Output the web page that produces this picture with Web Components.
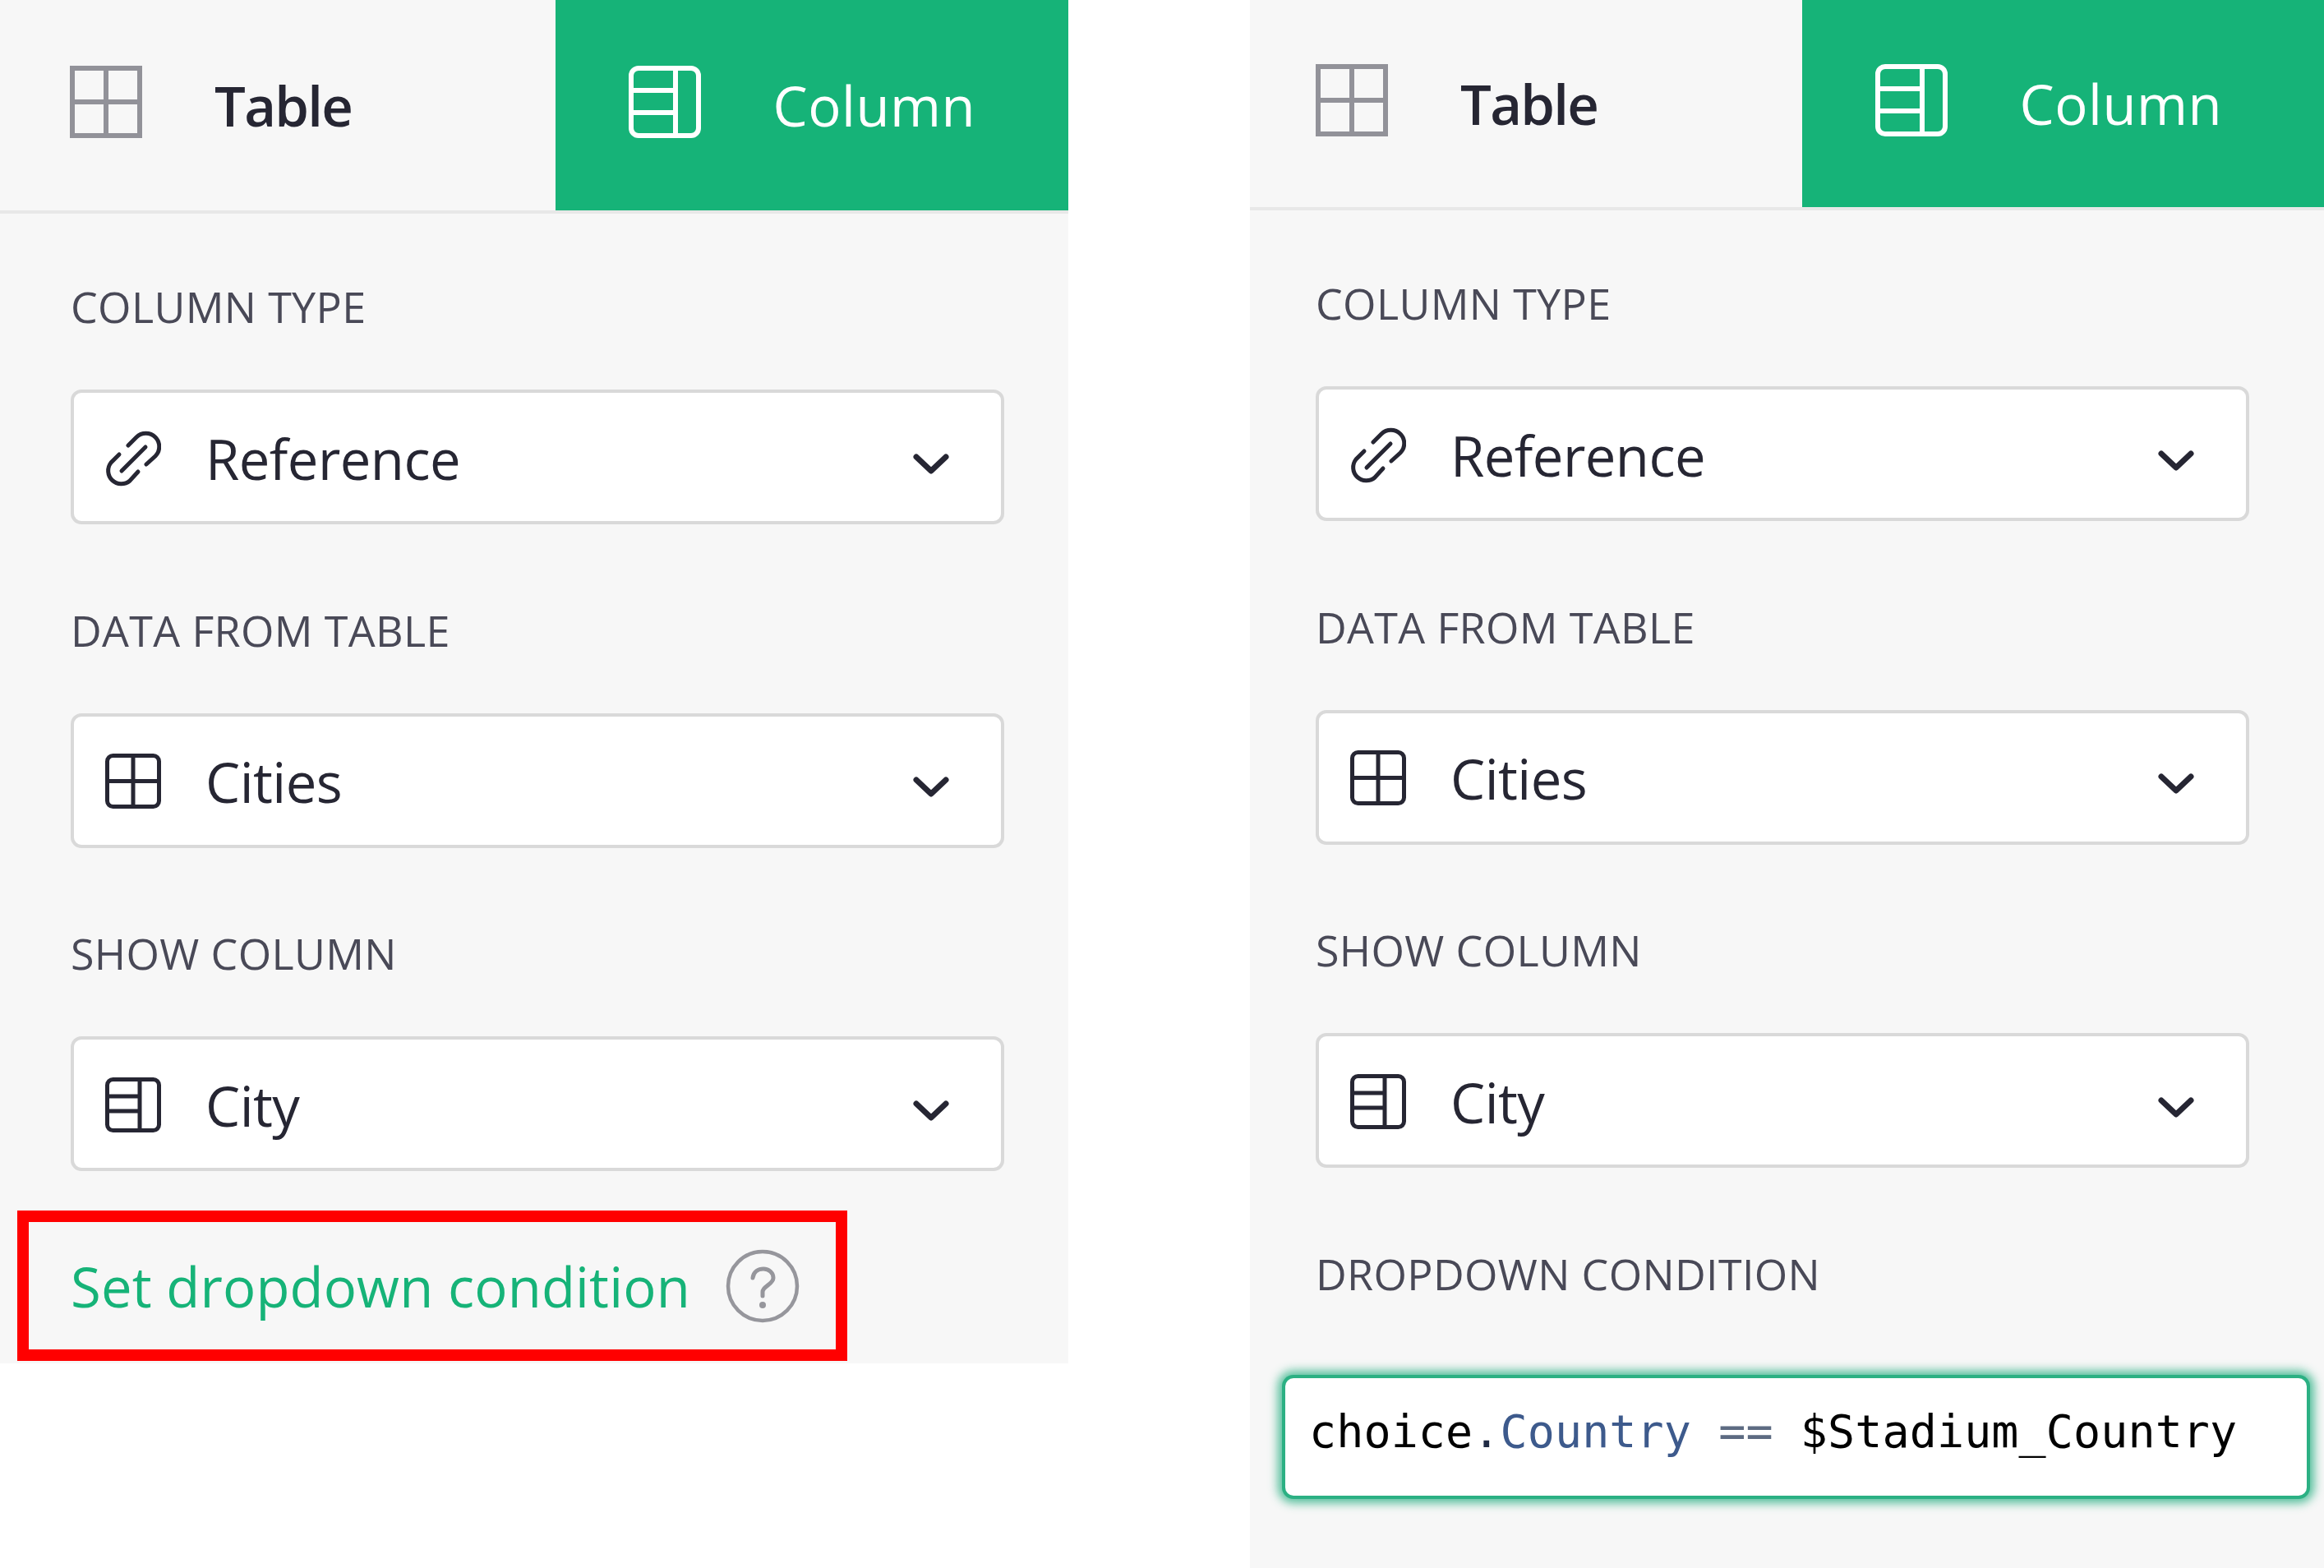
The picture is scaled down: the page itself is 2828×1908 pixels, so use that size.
<!DOCTYPE html>
<html><head><meta charset="utf-8"><title>Column panels</title>
<style>
html,body{margin:0;padding:0;background:#fff}
body{width:2828px;height:1908px;overflow:hidden;display:flex;gap:221px;align-items:flex-start;font-family:"Open Sans","Liberation Sans",sans-serif;color:#262633}
</style></head><body>
<gr-panel style="--panel-w:1300px;--panel-h:1659px;--tab-h:256px;--tab-split:676px;--pad:86px;--select-w:1136px;--tab-pad:85px">
  <gr-tab slot="tabs"><gr-icon name="tab-grid"></gr-icon>Table</gr-tab>
  <gr-tab slot="tabs" active><gr-icon name="tab-col"></gr-icon>Column</gr-tab>
  <gr-field label="COLUMN TYPE"><gr-select text="Reference" icon="link"></gr-select></gr-field>
  <gr-field label="DATA FROM TABLE"><gr-select text="Cities" icon="grid"></gr-select></gr-field>
  <gr-field label="SHOW COLUMN"><gr-select text="City" icon="col"></gr-select></gr-field>
  <gr-condition-link>Set dropdown condition</gr-condition-link>
</gr-panel>
<gr-panel style="--panel-w:1307px;--panel-h:1908px;--tab-h:252.4px;--tab-split:672px;--pad:80px;--select-w:1136px;--tab-pad:80px">
  <gr-tab slot="tabs"><gr-icon name="tab-grid"></gr-icon>Table</gr-tab>
  <gr-tab slot="tabs" active><gr-icon name="tab-col"></gr-icon>Column</gr-tab>
  <gr-field label="COLUMN TYPE"><gr-select text="Reference" icon="link"></gr-select></gr-field>
  <gr-field label="DATA FROM TABLE"><gr-select text="Cities" icon="grid"></gr-select></gr-field>
  <gr-field label="SHOW COLUMN"><gr-select text="City" icon="col"></gr-select></gr-field>
  <gr-field label="DROPDOWN CONDITION" tight><gr-code><span>choice</span><span style="color:#1f2a44">.</span><span style="color:#3d5a8c">Country</span><span style="color:#5d6b82"> == </span><span>$Stadium_Country</span></gr-code></gr-field>
</gr-panel>
<script>
const ICONS={
 'tab-grid':'<svg width="88" height="88" viewBox="0 0 88 88" fill="none" stroke="#929299" stroke-width="6"><rect x="3" y="3" width="82" height="82"/><path d="M44 3V85M3 44H85"/></svg>',
 'tab-col':'<svg width="88" height="88" viewBox="0 0 88 88" fill="none" stroke="#fff" stroke-width="6"><rect x="3" y="3" width="82" height="82" rx="9"/><path d="M57 3V85M3 30H57M3 57H57"/></svg>',
 'link':'<svg class="i" width="68" height="68" viewBox="0 0 68 68" fill="none" stroke="#262633" stroke-width="5" stroke-linecap="round"><path d="M28 18L38 8A16 16 0 0 1 61 31L50 41"/><path d="M17 29L7 39A16 16 0 0 0 30 61L40 50"/><path d="M20 49L49 20"/></svg>',
 'grid':'<svg class="i" width="68" height="68" viewBox="0 0 68 68" fill="none" stroke="#262633" stroke-width="5"><rect x="2.5" y="2.5" width="63" height="62" rx="7"/><path d="M34 2.5V64.5M2.5 33.5H65.5"/></svg>',
 'col':'<svg class="i" width="68" height="68" viewBox="0 0 68 68" fill="none" stroke="#262633" stroke-width="5"><rect x="2.5" y="2.5" width="63" height="62" rx="7"/><path d="M42 2.5V64.5M2.5 23H42M2.5 41H42"/></svg>',
 'chev':'<svg class="c" width="44" height="26" viewBox="0 0 44 26" fill="none" stroke="#262633" stroke-width="7" stroke-linecap="round" stroke-linejoin="round"><path d="M4 4L22 21L40 4"/></svg>',
 'help':'<svg width="90" height="90" viewBox="0 0 90 90" fill="none" stroke="#96969c" stroke-width="4.5" stroke-linecap="round"><circle cx="45" cy="45" r="42"/><path d="M33 35C34 27 40 24 46 24C53 24 58 29 58 35C58 43 45 45 45 52V57" stroke-width="5"/><circle cx="45" cy="68" r="4" fill="#96969c" stroke="none"/></svg>'
};
function def(name,css,html){
  customElements.define(name,class extends HTMLElement{
    constructor(){super();this.attachShadow({mode:'open'});}
    connectedCallback(){this.shadowRoot.innerHTML='<style>'+css+'</style>'+(typeof html==='function'?html(this):html);}
  });
}
def('gr-icon',':host{display:inline-flex;flex:none;line-height:0;margin-top:-8px}',el=>ICONS[el.getAttribute('name')]);
def('gr-panel',`:host{display:block;flex:none;width:var(--panel-w);height:var(--panel-h);background:#f7f7f7;overflow:hidden}
 .tabs{display:grid;grid-template-columns:var(--tab-split) 1fr;height:var(--tab-h);border-bottom:4px solid #e8e8e8}
 .body{padding:68px 0 0 var(--pad)}`,
 '<div class="tabs"><slot name="tabs"></slot></div><div class="body"><slot></slot></div>');
def('gr-tab',`:host{display:flex;align-items:center;gap:88px;padding-left:var(--tab-pad);height:100%;font-size:67px;font-weight:600;letter-spacing:-1.7px;color:#262633}
 :host([active]){background:#16b378;color:#fff;font-weight:400;letter-spacing:.5px;padding-left:88.5px;gap:88px}`,
 '<slot></slot>');
def('gr-field',`:host{display:block;margin-bottom:83.5px}
 :host([tight]){margin-bottom:0}
 .l{font-size:52px;line-height:90px;letter-spacing:.35px;color:#494957;margin-bottom:56px;white-space:nowrap}
 :host([tight]) .l{margin-bottom:82px}`,
 el=>'<div class="l">'+el.getAttribute('label')+'</div><slot></slot>');
def('gr-select',`:host{display:flex;box-sizing:border-box;align-items:center;width:var(--select-w);height:164px;background:#fff;border:4px solid #d9d9d9;border-radius:13px;padding:0 63px 0 38px;font-size:67px;letter-spacing:-.55px;color:#262633}
 .t{margin-left:54px;flex:1;white-space:nowrap;padding-top:3px}
 .i{margin-top:3px;flex:none}
 .c{margin-top:17px;flex:none}`,
 el=>ICONS[el.getAttribute('icon')]+'<span class="t">'+el.getAttribute('text')+'</span>'+ICONS.chev);
def('gr-condition-link',`:host{display:flex;box-sizing:border-box;align-items:center;width:1010px;height:183px;margin:-35.5px 0 0 -65px;border:14px solid #f00;padding-left:51px;gap:43px;font-size:67px;letter-spacing:.15px;color:#16b378;white-space:nowrap}`,
 '<span><slot></slot></span>'+ICONS.help);
def('gr-code',`:host{display:block;box-sizing:border-box;width:1243px;height:143px;margin-left:-37px;padding:0 0 22px 29px;line-height:130px;background:#fff;border-radius:10px;box-shadow:0 0 0 4px #2bb083,0 0 12px 9px rgba(43,176,131,.8);font-family:"DejaVu Sans Mono",monospace;font-size:55px;letter-spacing:.1px;color:#000;white-space:pre}`,
 '<slot></slot>');
</script>
</body></html>
